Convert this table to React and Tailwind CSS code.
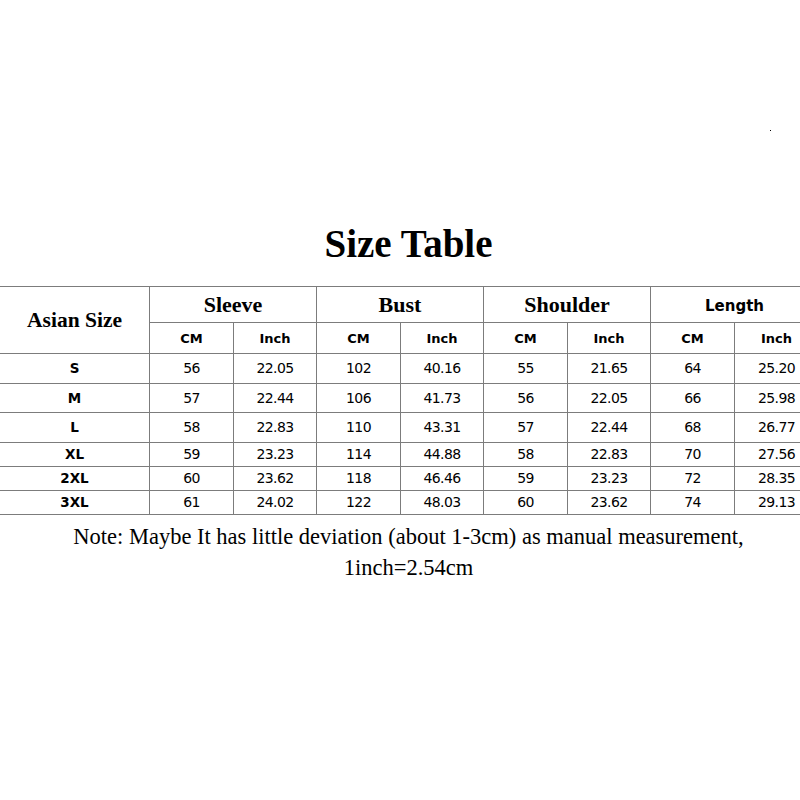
import React from "react";

const serif = "font-['Liberation_Serif','Times_New_Roman',serif]";
const sans = "font-['DejaVu_Sans',Verdana,sans-serif]";

const rows = [
  ["S", "56", "22.05", "102", "40.16", "55", "21.65", "64", "25.20"],
  ["M", "57", "22.44", "106", "41.73", "56", "22.05", "66", "25.98"],
  ["L", "58", "22.83", "110", "43.31", "57", "22.44", "68", "26.77"],
  ["XL", "59", "23.23", "114", "44.88", "58", "22.83", "70", "27.56"],
  ["2XL", "60", "23.62", "118", "46.46", "59", "23.23", "72", "28.35"],
  ["3XL", "61", "24.02", "122", "48.03", "60", "23.62", "74", "29.13"],
];

function Cell({ children, className = "" }) {
  return (
    <div className={"bg-white flex items-center justify-center text-black " + className}>
      {children}
    </div>
  );
}

export default function App() {
  return (
    <div className="w-[800px] h-[800px] bg-white overflow-hidden relative">
      <div className="absolute left-[770px] top-[130px] w-px h-px bg-black" />
      <div className="w-[817px] pt-[224px] flex flex-col">
        <div className={"text-center text-[39px] leading-[39px] font-bold text-black " + serif}>
          Size Table
        </div>
        <div className="mt-[23px] grid bg-[#7c7c7c] gap-px py-px grid-cols-[149px_83px_82px_83px_82px_83px_82px_83px_83px] grid-rows-[35px_30px_29px_28px_29px_23px_23px_23px]">
          <Cell className={"row-span-2 text-[21.5px] font-bold " + serif}>Asian Size</Cell>
          <Cell className={"col-span-2 text-[22px] font-bold " + serif}>Sleeve</Cell>
          <Cell className={"col-span-2 text-[22px] font-bold " + serif}>Bust</Cell>
          <Cell className={"col-span-2 text-[22px] font-bold " + serif}>Shoulder</Cell>
          <Cell className={"col-span-2 text-[15px] font-bold pt-[4px] " + sans}>Length</Cell>
          {["CM", "Inch", "CM", "Inch", "CM", "Inch", "CM", "Inch"].map((t, i) => (
            <Cell key={i} className={"text-[13px] font-bold pt-[2px] " + sans}>
              {t}
            </Cell>
          ))}
          {rows.map((r, ri) =>
            r.map((v, ci) =>
              ci === 0 ? (
                <Cell key={ri + "-" + ci} className={"text-[13.5px] font-bold " + sans}>
                  {v}
                </Cell>
              ) : (
                <Cell key={ri + "-" + ci} className={"text-[14px] tracking-[-0.6px] " + sans}>
                  {v}
                </Cell>
              )
            )
          )}
        </div>
        <div className={"mt-[6px] text-center text-[22.5px] leading-[31px] text-black " + serif}>
          <div>Note: Maybe It has little deviation (about 1-3cm) as manual measurement,</div>
          <div>1inch=2.54cm</div>
        </div>
      </div>
    </div>
  );
}
